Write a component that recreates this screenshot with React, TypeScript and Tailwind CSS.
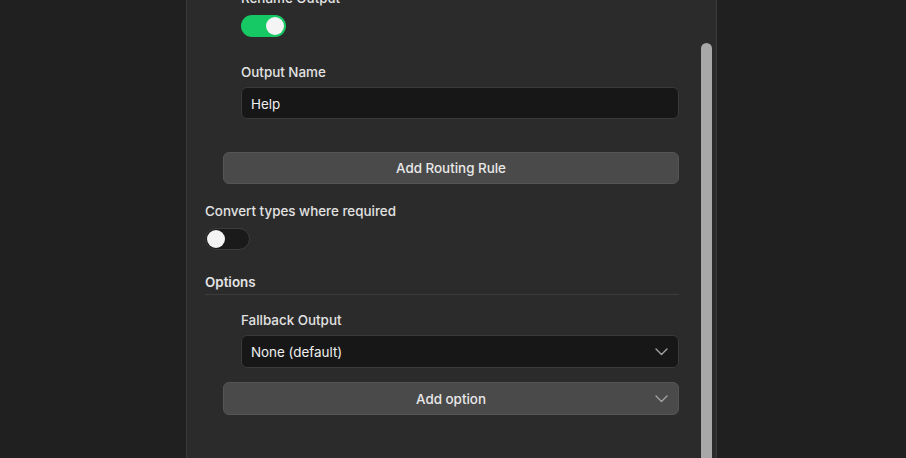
import React from 'react';

function Chevron() {
  return (
    <svg width="13" height="8" viewBox="0 0 13 8" fill="none" className="shrink-0">
      <polyline points="1,1 6.5,6.5 12,1" stroke="#a3a3a3" strokeWidth="1.4" strokeLinecap="round" strokeLinejoin="round" />
    </svg>
  );
}

function Toggle({ on }: { on: boolean }) {
  return on ? (
    <div className="flex h-[22px] w-[45px] items-center justify-end rounded-full bg-[#17c964] pr-[2px]">
      <span className="h-[18px] w-[18px] rounded-full bg-[#f4f4f4]" />
    </div>
  ) : (
    <div className="flex h-[22px] w-[45px] items-center rounded-full border border-[#3c3c3c] bg-[#1a1a1a] pl-[1px]">
      <span className="h-[18px] w-[18px] rounded-full bg-[#f4f4f4]" />
    </div>
  );
}

function Label({ children, className = '' }: { children: React.ReactNode; className?: string }) {
  return <div className={`text-[13.4px] font-medium leading-5 text-[#e2e2e2] ${className}`}>{children}</div>;
}

export default function App() {
  return (
    <div
      className="h-screen overflow-hidden bg-[#202020] pl-[186px]"
      style={{ fontFamily: 'Inter, "Noto Sans", sans-serif' }}
    >
      <div className="flex h-full w-[531px] border-x border-[#3a3a3a] bg-[#2b2b2b]">
        {/* Scrolled content */}
        <div className="flex-1 pl-[18px] pr-[22px]">
          <div className="-mt-[12px]">
            <div className="ml-[36px]">
              <Label>Rename Output</Label>
              <div className="mt-[7px]">
                <Toggle on />
              </div>

              <Label className="mt-[25px]">Output Name</Label>
              <div className="mt-[5px] flex h-[32px] items-center rounded-md border border-[#3a3a3a] bg-[#171717] pl-[9px] pt-[3px] text-[13.4px] text-[#f0f0f0]">
                Help
              </div>
            </div>

            <div className="ml-[18px] mt-[33px] flex h-[32px] items-center justify-center rounded-md border border-[#555555] bg-[#4a4a4a] pt-[1px] text-[13.4px] font-medium text-[#e8e8e8]">
              Add Routing Rule
            </div>

            <Label className="mt-[17px]">Convert types where required</Label>
            <div className="mt-[7px]">
              <Toggle on={false} />
            </div>

            {/* Options */}
            <div className="mt-[22px] border-b border-[#3c3c3c] pb-[2px] text-[13.4px] font-semibold leading-5 text-[#e4e4e4]">
              Options
            </div>

            <div className="ml-[36px]">
              <Label className="mt-[15px]">Fallback Output</Label>
              <div className="mt-[5px] flex h-[33px] items-center justify-between rounded-md border border-[#3a3a3a] bg-[#171717] pl-[9px] pr-[10px] text-[13.4px] text-[#f0f0f0]">
                <span className="pt-[2px]">None (default)</span>
                <Chevron />
              </div>
            </div>

            <div className="relative ml-[18px] mt-[14px] flex h-[33px] items-center justify-center rounded-md border border-[#555555] bg-[#4a4a4a] pt-[2px] text-[13.4px] font-medium text-[#e8e8e8]">
              Add option
              <span className="absolute right-[10px] top-1/2 -translate-y-1/2">
                <Chevron />
              </span>
            </div>
          </div>
        </div>

        {/* Scrollbar */}
        <div className="mr-[4px] flex w-[11px] flex-col">
          <div className="mt-[43px] flex-1 rounded-t-full bg-[#a8a8a8]" />
        </div>
      </div>
    </div>
  );
}
